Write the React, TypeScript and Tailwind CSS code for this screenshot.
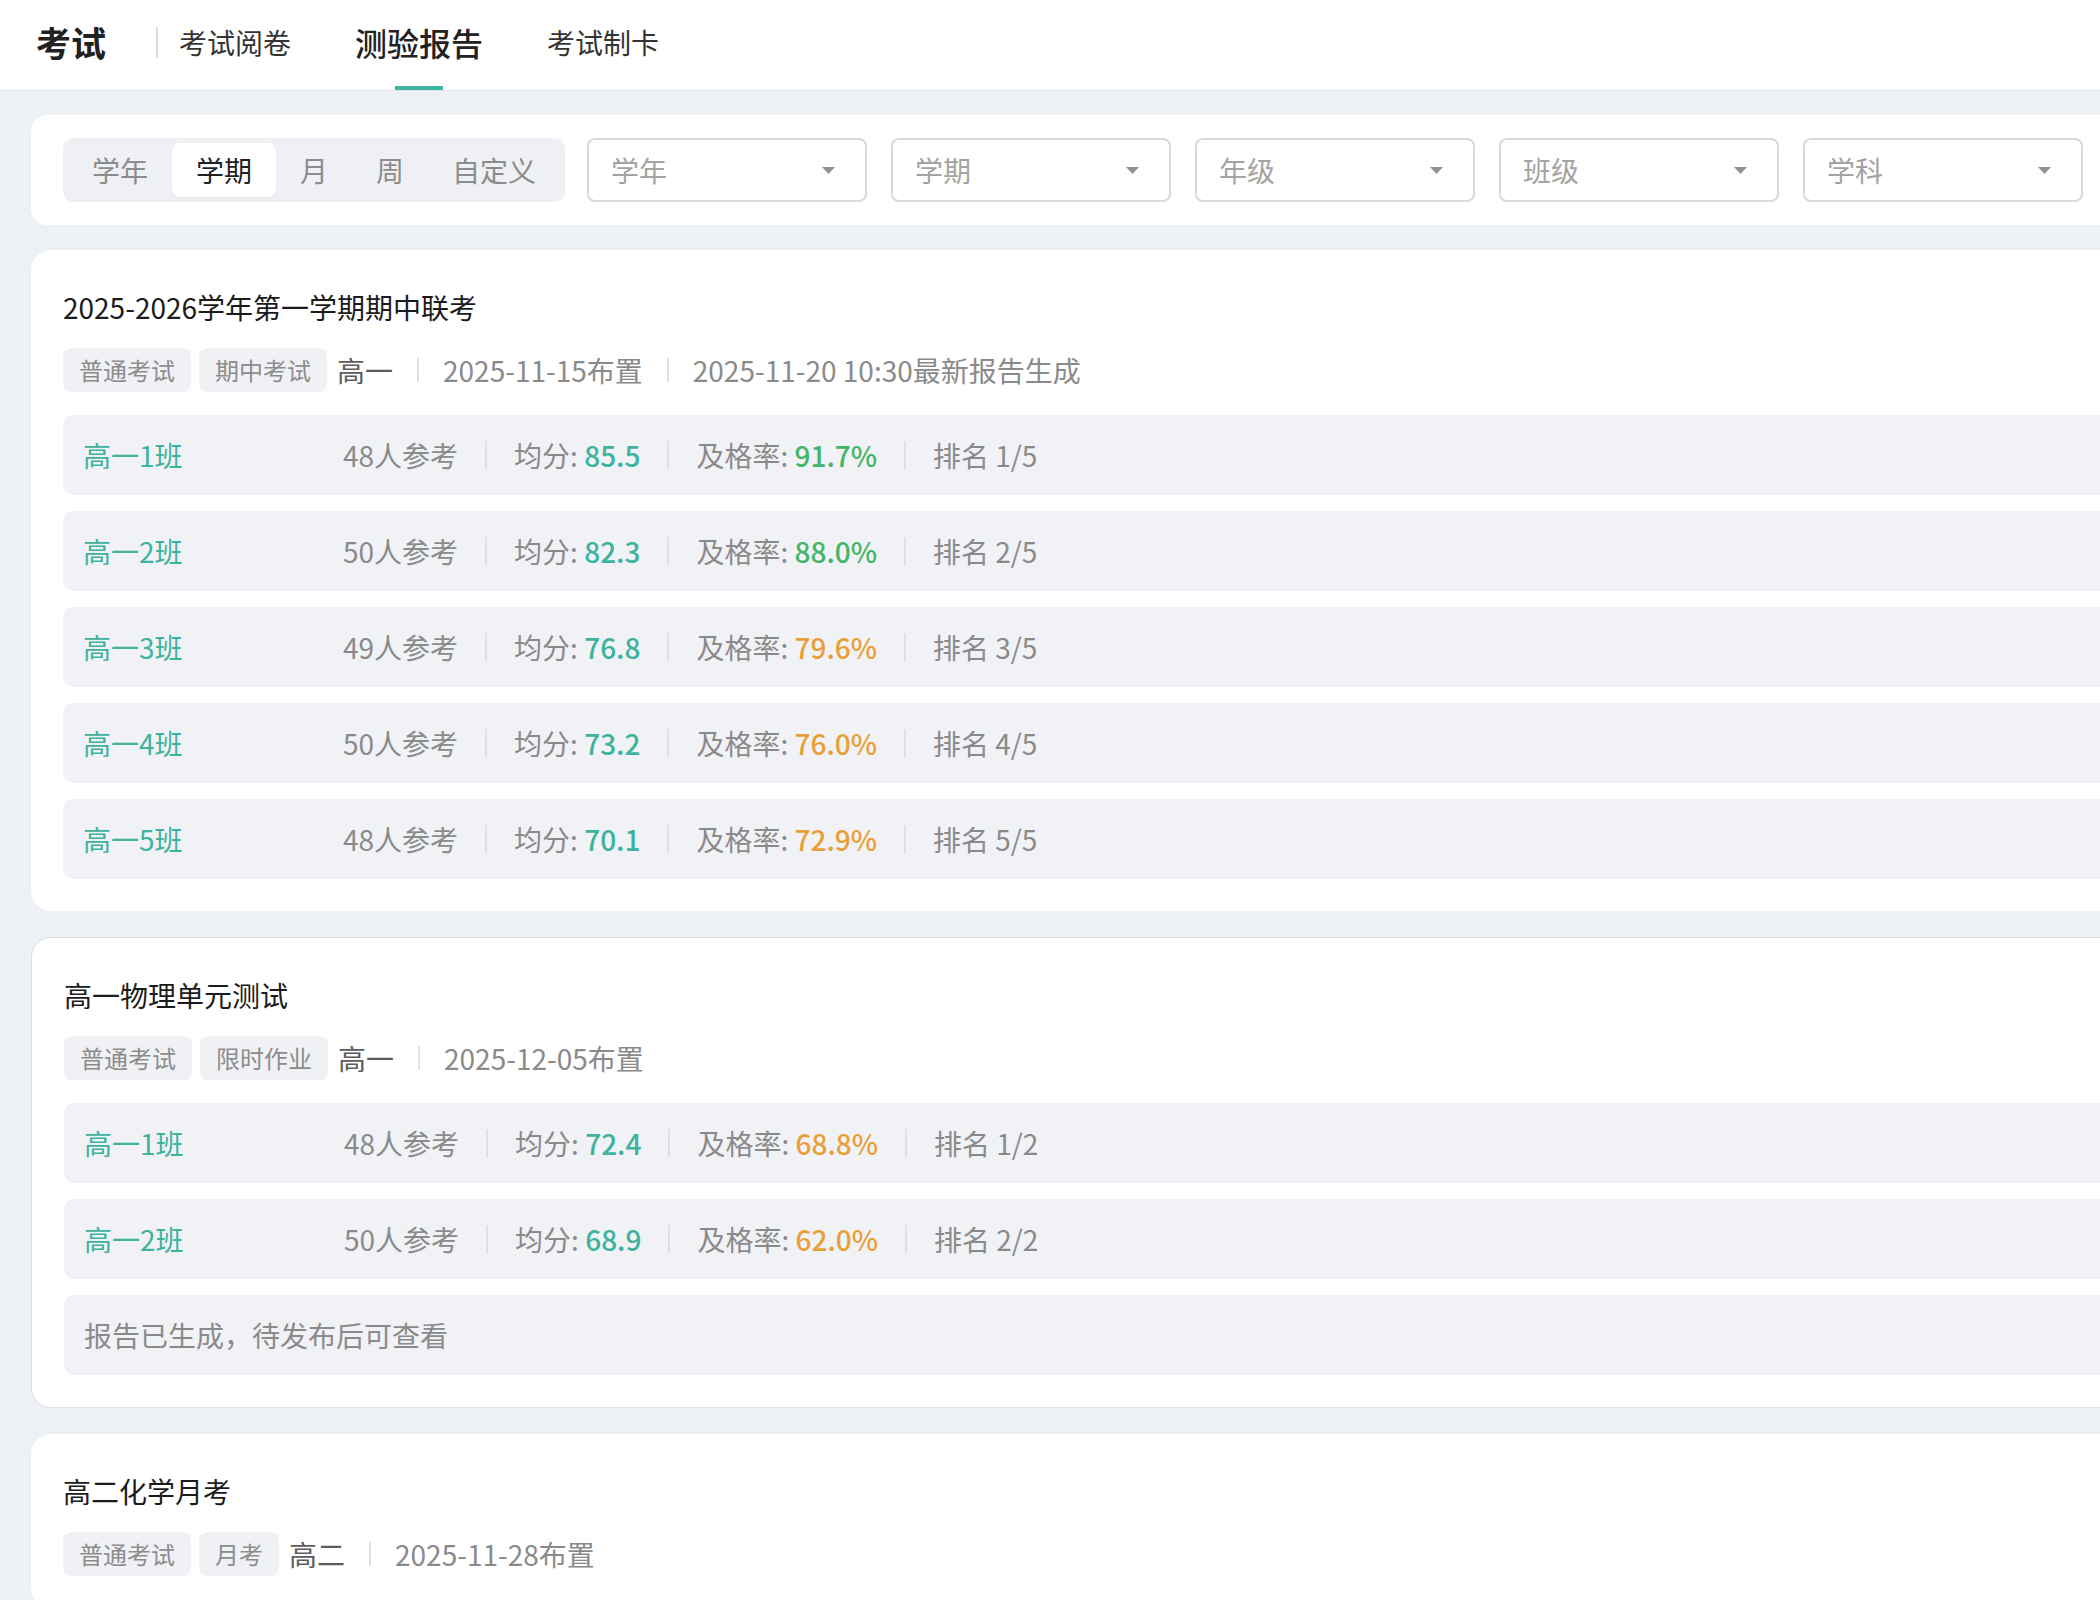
import React from "react";

type ClassRow = {
  name: string;
  count: number;
  avg: string;
  rate: number;
  rank: string;
};

type Exam = {
  id: number;
  title: string;
  tags: string[];
  grade: string;
  meta: string[];
  classes: ClassRow[];
  note?: string;
  pending?: boolean;
};

const exams: Exam[] = [
  {
    id: 1,
    title: "2025-2026学年第一学期期中联考",
    tags: ["普通考试", "期中考试"],
    grade: "高一",
    meta: ["2025-11-15布置", "2025-11-20 10:30最新报告生成"],
    classes: [
      { name: "高一1班", count: 48, avg: "85.5", rate: 91.7, rank: "1/5" },
      { name: "高一2班", count: 50, avg: "82.3", rate: 88.0, rank: "2/5" },
      { name: "高一3班", count: 49, avg: "76.8", rate: 79.6, rank: "3/5" },
      { name: "高一4班", count: 50, avg: "73.2", rate: 76.0, rank: "4/5" },
      { name: "高一5班", count: 48, avg: "70.1", rate: 72.9, rank: "5/5" },
    ],
  },
  {
    id: 2,
    title: "高一物理单元测试",
    tags: ["普通考试", "限时作业"],
    grade: "高一",
    meta: ["2025-12-05布置"],
    classes: [
      { name: "高一1班", count: 48, avg: "72.4", rate: 68.8, rank: "1/2" },
      { name: "高一2班", count: 50, avg: "68.9", rate: 62.0, rank: "2/2" },
    ],
    note: "报告已生成，待发布后可查看",
    pending: true,
  },
  {
    id: 3,
    title: "高二化学月考",
    tags: ["普通考试", "月考"],
    grade: "高二",
    meta: ["2025-11-28布置"],
    classes: [],
  },
];

const periods = ["学年", "学期", "月", "周", "自定义"];
const filters = ["学年", "学期", "年级", "班级", "学科"];

function Caret() {
  return (
    <svg width="13" height="7" viewBox="0 0 13 7" className="shrink-0">
      <path d="M0 0h13L6.5 7z" fill="#8f9094" />
    </svg>
  );
}

function RowDivider() {
  return <span className="mx-[27px] h-[28px] w-[2px] bg-[#dedfe2]" />;
}

function MetaDivider() {
  return <span className="mx-[24px] h-[24px] w-[2px] bg-[#e0e1e4]" />;
}

function ClassLine({ row }: { row: ClassRow }) {
  return (
    <div className="flex h-[80px] items-center rounded-[10px] bg-[#f1f2f6] pl-[20px] text-[28px] text-[#8a8a8a]">
      <span className="w-[260px] text-[#3db39e]">{row.name}</span>
      <span>{row.count}人参考</span>
      <RowDivider />
      <span>
        均分: <span className="font-medium text-[#3db39e]">{row.avg}</span>
      </span>
      <RowDivider />
      <span>
        及格率:{" "}
        <span
          className={
            row.rate >= 85
              ? "font-medium text-[#42b566]"
              : "font-medium text-[#e99f36]"
          }
        >
          {row.rate.toFixed(1)}%
        </span>
      </span>
      <RowDivider />
      <span>排名 {row.rank}</span>
    </div>
  );
}

function ExamCard({ exam }: { exam: Exam }) {
  return (
    <section
      className={
        exam.pending
          ? "rounded-[20px] border border-[#dcdee2] bg-white px-[32px] pt-[32px] pb-[32px]"
          : "rounded-[20px] bg-white px-[32px] pt-[32px] pb-[32px]"
      }
    >
      <h2 className="flex h-[50px] items-center text-[28px] text-[#1b1b1b]">
        {exam.title}
      </h2>
      <div className="mt-[16px] flex h-[44px] items-center">
        {exam.tags.map((tag) => (
          <span
            key={tag}
            className="mr-[8px] flex h-[44px] items-center rounded-[8px] bg-[#f0f1f5] px-[16px] text-[24px] text-[#8c8c8c]"
          >
            {tag}
          </span>
        ))}
        <span className="ml-[2px] text-[28px] text-[#5c5c5c]">{exam.grade}</span>
        {exam.meta.map((m) => (
          <React.Fragment key={m}>
            <MetaDivider />
            <span className="text-[28px] text-[#8a8a8a]">{m}</span>
          </React.Fragment>
        ))}
      </div>
      {(exam.classes.length > 0 || exam.note) && (
        <div className="mt-[23px] flex flex-col gap-[16px]">
          {exam.classes.map((row) => (
            <ClassLine key={row.name} row={row} />
          ))}
          {exam.note && (
            <div className="flex h-[80px] items-center rounded-[10px] bg-[#f1f2f6] pl-[20px] text-[28px] text-[#8a8a8a]">
              {exam.note}
            </div>
          )}
        </div>
      )}
    </section>
  );
}

export default function App() {
  return (
    <div className="h-screen w-full overflow-hidden bg-[#edf0f4] font-['Noto_Sans_CJK_SC','Noto_Sans',sans-serif]">
      {/* 顶部导航 */}
      <header className="flex h-[91px] w-full items-center border-b border-[#e1e4e8] bg-white pl-[36px]">
        <span className="mb-[6px] text-[35px] font-bold text-[#222]">考试</span>
        <span className="mb-[6px] ml-[50px] h-[31px] w-[2px] bg-[#dcdcdc]" />
        <nav className="ml-[21px] flex h-full items-center gap-[64px]">
          <span className="mb-[6px] text-[28px] text-[#333]">考试阅卷</span>
          <span className="relative flex h-full items-center text-[32px] font-medium text-[#222]">
            <span className="mb-[6px]">测验报告</span>
            <span className="absolute bottom-0 left-1/2 h-[4px] w-[48px] -translate-x-1/2 bg-[#3fb3a2]" />
          </span>
          <span className="mb-[6px] text-[28px] text-[#333]">考试制卡</span>
        </nav>
      </header>

      <main className="w-[2260px] px-[31px] pt-[24px]">
        {/* 筛选栏 */}
        <div className="flex items-center rounded-[16px] bg-white px-[32px] py-[23px]">
          <div className="flex h-[64px] items-center rounded-[10px] bg-[#eef0f4] p-[5px]">
            {periods.map((p) => (
              <span
                key={p}
                className={
                  p === "学期"
                    ? "flex h-[54px] items-center rounded-[8px] bg-white px-[24px] text-[28px] text-[#1f1f1f] shadow-[0_1px_2px_rgba(0,0,0,0.06)]"
                    : "flex h-[54px] items-center px-[24px] text-[28px] text-[#8c8c8c]"
                }
              >
                {p}
              </span>
            ))}
          </div>
          <div className="ml-[22px] flex gap-[24px]">
            {filters.map((f) => (
              <div
                key={f}
                className="flex h-[64px] w-[280px] items-center justify-between rounded-[8px] border-2 border-[#d8d9dc] bg-white pl-[22px] pr-[30px]"
              >
                <span className="text-[28px] text-[#a3a3a3]">{f}</span>
                <Caret />
              </div>
            ))}
          </div>
        </div>

        {/* 报告列表 */}
        <div className="mt-[25px] flex flex-col gap-[26px]">
          {exams.map((exam) => (
            <ExamCard key={exam.id} exam={exam} />
          ))}
        </div>
      </main>
    </div>
  );
}
